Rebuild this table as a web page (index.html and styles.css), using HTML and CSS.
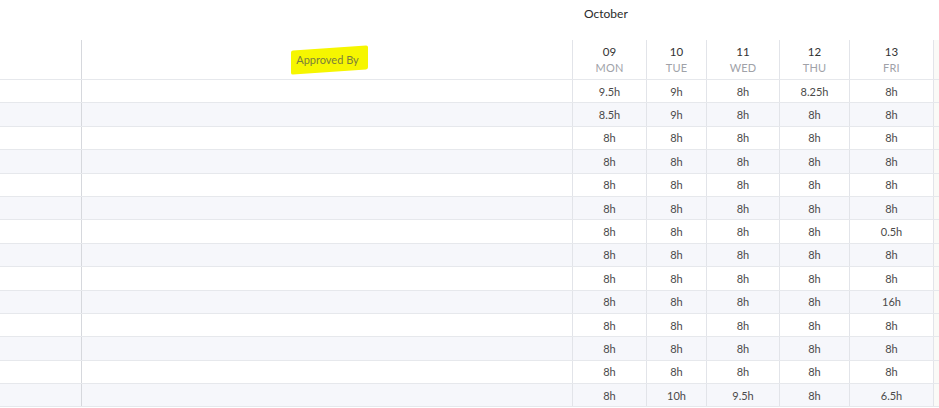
FILE: index.html
```html
<!DOCTYPE html>
<html>
<head>
<meta charset="utf-8">
<link rel="stylesheet" href="styles.css">
</head>
<body>
<div class="sheet">
  <div class="month-bar">
    <div class="month-spacer"></div>
    <div class="month-label">October</div>
  </div>
  <div class="grid" id="grid">
    <div class="row head">
      <div class="cell c0"></div>
      <div class="cell c1"><span class="hl">Approved By</span></div>
      <div class="cell day c2"><span class="num">09</span><span class="dname">Mon</span></div>
      <div class="cell day c3"><span class="num">10</span><span class="dname">Tue</span></div>
      <div class="cell day c4"><span class="num">11</span><span class="dname">Wed</span></div>
      <div class="cell day c5"><span class="num">12</span><span class="dname">Thu</span></div>
      <div class="cell day c6"><span class="num">13</span><span class="dname">Fri</span></div>
      <div class="cell c7"></div>
    </div>
  </div>
</div>
<script src="app.js"></script>
</body>
</html>
```
FILE: app.js
```js
var data = [
  ["9.5h","9h","8h","8.25h","8h"],
  ["8.5h","9h","8h","8h","8h"],
  ["8h","8h","8h","8h","8h"],
  ["8h","8h","8h","8h","8h"],
  ["8h","8h","8h","8h","8h"],
  ["8h","8h","8h","8h","8h"],
  ["8h","8h","8h","8h","0.5h"],
  ["8h","8h","8h","8h","8h"],
  ["8h","8h","8h","8h","8h"],
  ["8h","8h","8h","8h","16h"],
  ["8h","8h","8h","8h","8h"],
  ["8h","8h","8h","8h","8h"],
  ["8h","8h","8h","8h","8h"],
  ["8h","10h","9.5h","8h","6.5h"]
];
var grid = document.getElementById("grid");
data.forEach(function (r, i) {
  var row = document.createElement("div");
  row.className = "row body" + (i % 2 ? " alt" : "");
  var html = '<div class="cell c0"></div><div class="cell c1"></div>';
  r.forEach(function (v, j) {
    html += '<div class="cell val c' + (j + 2) + '">' + v + '</div>';
  });
  html += '<div class="cell c7"></div>';
  row.innerHTML = html;
  grid.appendChild(row);
});
```
FILE: styles.css
```css
html, body {
  margin: 0;
  padding: 0;
  background: #ffffff;
}
body {
  font-family: Lato, "Open Sans", sans-serif;
  color: #333;
  width: 939px;
  height: 408px;
  overflow: hidden;
}
.month-bar {
  display: flex;
  height: 40px;
}
.month-spacer {
  width: 584px;
}
.month-label {
  font-size: 12px;
  color: #2a2a2a;
  padding-top: 6px;
  line-height: 16px;
}
.row {
  display: grid;
  grid-template-columns: 82px 491px 74px 60px 73px 70px 84px 1fr;
  border-bottom: 1px solid #e6e8ec;
}
.row.head {
  height: 39px;
}
.row.body {
  height: 22.4px;
}
.row.alt {
  background: #f6f7fb;
}
.cell {
  border-right: 1px solid #e2e4e9;
  display: flex;
  align-items: center;
  justify-content: center;
  font-size: 11px;
}
.c0 {
  border-right-color: #d6d8dd;
}
.c7 {
  border-right: none;
  background: #fafaf7;
}
.head .c1 {
  align-items: flex-start;
}
.hl {
  position: relative;
  margin-top: 13px;
  margin-left: 1px;
  color: #7b7f3c;
  font-size: 11px;
  line-height: 14px;
  z-index: 0;
}
.hl::before {
  content: "";
  position: absolute;
  left: -5px;
  right: -9px;
  top: -5px;
  bottom: -5px;
  background: #f6f600;
  transform: skewY(-4deg);
  border-radius: 2px;
  z-index: -1;
}
.day {
  flex-direction: column;
  justify-content: flex-start;
  padding-top: 4px;
}
.num {
  font-size: 11.5px;
  color: #333;
  line-height: 16px;
}
.dname {
  font-size: 11px;
  color: #a0a2a8;
  text-transform: uppercase;
  line-height: 16px;
  letter-spacing: 0.2px;
}
.val {
  color: #4a4a4a;
  font-size: 11px;
}
```
